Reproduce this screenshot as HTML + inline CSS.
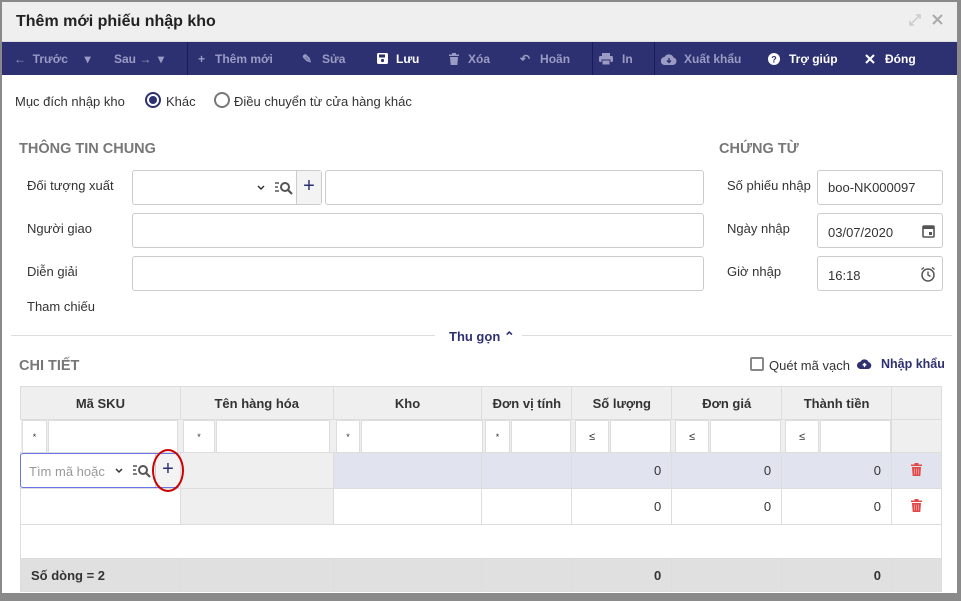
<!DOCTYPE html>
<html><head><meta charset="utf-8"><style>
*{box-sizing:border-box;margin:0;padding:0}
body{width:961px;height:601px;background:#8a8a8a;font-family:"Liberation Sans",Arial,sans-serif;font-size:13px;color:#333;position:relative;overflow:hidden}
.a{position:absolute}
#dlg{position:absolute;left:2px;top:2px;width:955px;height:591px;background:#fff}
#title{position:absolute;left:0;top:0;width:955px;height:40px;background:#efefef;border-bottom:1px solid #ddd}
#tb{position:absolute;left:0;top:40px;width:955px;height:33px;background:#2e3171;color:#9a9cc4;font-weight:bold;font-size:12px}
#tb span{position:absolute;top:10px;white-space:nowrap}
#tb svg{position:absolute}
.w{color:#fff}
.lbl{position:absolute;font-size:13px;color:#333}
.inp{position:absolute;border:1px solid #ccc;border-radius:3px;background:#fff;height:35px}
.h{position:absolute;font-weight:bold;color:#777;font-size:14.5px}
table{position:absolute;left:18px;top:384px;border-collapse:collapse;width:922px}
td{border:1px solid #ddd;padding:0}
</style></head><body>
<div id="dlg">
<div id="title"><div class="a" style="left:14px;top:11px;font-size:16px;font-weight:bold;color:#222">Thêm mới phiếu nhập kho</div>
<svg class="a" style="left:907px;top:12px" width="12" height="12" viewBox="0 0 12 12"><path d="M1 11L11 1M7 1h4v4M1 7v4h4" stroke="#ccc" stroke-width="1.5" fill="none"/></svg>
<svg class="a" style="left:930px;top:12px" width="11" height="11" viewBox="0 0 11 11"><path d="M1 1L10 10M10 1L1 10" stroke="#aaa" stroke-width="2"/></svg></div>
<div id="tb">
<span style="left:12px">←&nbsp; Trước &nbsp;&nbsp;&nbsp; ▾</span>
<span style="left:112px">Sau →&nbsp; ▾</span>
<div class="a" style="left:185px;top:0;width:1px;height:33px;background:#1a1a60"></div>
<span style="left:196px">+&nbsp;&nbsp; Thêm mới</span>
<span style="left:300px">✎&nbsp;&nbsp; Sửa</span>
<svg style="left:375px;top:11px" width="11" height="11" viewBox="0 0 11 11"><rect x="0" y="0" width="11" height="11" rx="1.5" fill="#fff"/><rect x="2" y="1.5" width="6" height="3" fill="#2e3171"/><circle cx="5.5" cy="7.5" r="1.6" fill="#2e3171"/></svg>
<span class="w" style="left:394px">Lưu</span>
<svg style="left:447px;top:11px" width="10" height="12" viewBox="0 0 10 12"><path d="M0 1.5h10v1.5H0zM3 0h4v1.5H3zM1 4h8l-.7 8H1.7z" fill="#9a9cc4"/></svg>
<span style="left:466px">Xóa</span>
<span style="left:518px">↶&nbsp;&nbsp; Hoãn</span>
<div class="a" style="left:590px;top:0;width:1px;height:33px;background:#1a1a60"></div>
<svg style="left:597px;top:11px" width="14" height="12" viewBox="0 0 14 12"><rect x="3" y="0" width="8" height="3" fill="#9a9cc4"/><rect x="0" y="3" width="14" height="6" rx="1.5" fill="#9a9cc4"/><rect x="3" y="7" width="8" height="5" fill="#9a9cc4" stroke="#2e3171"/></svg>
<span style="left:620px">In</span>
<div class="a" style="left:652px;top:0;width:1px;height:33px;background:#1a1a60"></div>
<svg style="left:659px;top:12px" width="16" height="11" viewBox="0 0 16 11"><path d="M4 11a4 4 0 0 1-.5-8A5 5 0 0 1 12.5 3.5 3.8 3.8 0 0 1 12 11z" fill="#9a9cc4"/><path d="M8 4v4M6 6.5l2 2 2-2" stroke="#2e3171" stroke-width="1.4" fill="none"/></svg>
<span style="left:682px">Xuất khẩu</span>
<svg style="left:766px;top:11px" width="12" height="12" viewBox="0 0 12 12"><circle cx="6" cy="6" r="6" fill="#fff"/><text x="6" y="9.5" font-size="9" font-weight="bold" text-anchor="middle" fill="#2e3171" font-family="Liberation Sans">?</text></svg>
<span class="w" style="left:787px">Trợ giúp</span>
<svg style="left:863px;top:12px" width="10" height="10" viewBox="0 0 10 10"><path d="M1 1L9 9M9 1L1 9" stroke="#fff" stroke-width="2"/></svg>
<span class="w" style="left:883px">Đóng</span>
</div>
<div class="lbl" style="left:13px;top:92px">Mục đích nhập kho</div>
<div class="a" style="left:143px;top:90px;width:16px;height:16px;border:2px solid #2e3171;border-radius:50%"><div style="margin:2px;width:8px;height:8px;border-radius:50%;background:#2e3171"></div></div>
<div class="lbl" style="left:164px;top:92px">Khác</div>
<div class="a" style="left:212px;top:90px;width:16px;height:16px;border:2px solid #777;border-radius:50%"></div>
<div class="lbl" style="left:232px;top:92px">Điều chuyển từ cửa hàng khác</div>
<div class="h" style="left:17px;top:139px">THÔNG TIN CHUNG</div>
<div class="h" style="left:717px;top:139px">CHỨNG TỪ</div>
<div class="lbl" style="left:25px;top:176px">Đối tượng xuất</div>
<div class="lbl" style="left:25px;top:219px">Người giao</div>
<div class="lbl" style="left:25px;top:262px">Diễn giải</div>
<div class="lbl" style="left:25px;top:297px">Tham chiếu</div>
<div class="inp" style="left:130px;top:168px;width:190px"><svg class="a" style="left:124px;top:14px" width="8" height="6" viewBox="0 0 8 6"><path d="M1 1l3 3 3-3" stroke="#333" stroke-width="1.5" fill="none"/></svg>
<svg class="a" style="left:142px;top:10px" width="18" height="14" viewBox="0 0 18 14"><path d="M0 2h4M0 6h3M0 10h4" stroke="#555" stroke-width="1.6"/><circle cx="10" cy="6" r="4" stroke="#555" stroke-width="2" fill="none"/><path d="M13 9l4 4" stroke="#555" stroke-width="2.2"/></svg>
<div class="a" style="left:163px;top:0;width:25px;height:33px;background:#f3f3f3;border-left:1px solid #ccc;color:#2e3171;font-size:20px;text-align:center;line-height:30px">+</div></div>
<div class="inp" style="left:323px;top:168px;width:379px"></div>
<div class="inp" style="left:130px;top:211px;width:572px"></div>
<div class="inp" style="left:130px;top:254px;width:572px"></div>
<div class="lbl" style="left:725px;top:176px">Số phiếu nhập</div>
<div class="lbl" style="left:725px;top:219px">Ngày nhập</div>
<div class="lbl" style="left:725px;top:262px">Giờ nhập</div>
<div class="inp" style="left:815px;top:168px;width:126px"><div class="a" style="left:10px;top:9px">boo-NK000097</div></div>
<div class="inp" style="left:815px;top:211px;width:126px"><div class="a" style="left:10px;top:11px">03/07/2020</div><svg class="a" style="left:104px;top:10px" width="13" height="14" viewBox="0 0 13 14"><rect x="1" y="2" width="11" height="11" rx="1" stroke="#555" stroke-width="1.6" fill="none"/><rect x="1" y="2" width="11" height="3" fill="#555"/><rect x="7" y="8" width="3" height="3" fill="#555"/></svg></div>
<div class="inp" style="left:815px;top:254px;width:126px"><div class="a" style="left:10px;top:11px">16:18</div><svg class="a" style="left:102px;top:9px" width="16" height="16" viewBox="0 0 16 16"><circle cx="8" cy="9" r="6" stroke="#555" stroke-width="1.5" fill="none"/><path d="M8 5.5V9l2.5 1.5M1.5 3.5L4 1.5M14.5 3.5L12 1.5" stroke="#555" stroke-width="1.4" fill="none"/></svg></div>
<div class="a" style="left:9px;top:333px;width:424px;height:1px;background:#ddd"></div>
<div class="a" style="left:520px;top:333px;width:430px;height:1px;background:#ddd"></div>
<div class="a" style="left:447px;top:327px;font-weight:bold;color:#2e3171">Thu gọn ⌃</div>
<div class="h" style="left:17px;top:356px">CHI TIẾT</div>
<div class="a" style="left:748px;top:355px;width:14px;height:14px;border:2px solid #888;border-radius:2px"></div>
<div class="lbl" style="left:767px;top:356px">Quét mã vạch</div>
<svg class="a" style="left:855px;top:357px" width="15" height="10" viewBox="0 0 16 11"><path d="M4 11a4 4 0 0 1-.5-8A5 5 0 0 1 12.5 3.5 3.8 3.8 0 0 1 12 11z" fill="#2e3171"/><path d="M8 9V5M6 7l2-2 2 2" stroke="#fff" stroke-width="1.4" fill="none"/></svg>
<div class="a" style="left:879px;top:355px;font-weight:bold;color:#2e3171;font-size:12.5px">Nhập khẩu</div>
<table>
<tr style="height:33px;background:#efefef;font-weight:bold;text-align:center"><td style="width:160px">Mã SKU</td><td style="width:153px">Tên hàng hóa</td><td style="width:149px">Kho</td><td style="width:90px">Đơn vị tính</td><td style="width:100px">Số lượng</td><td style="width:110px">Đơn giá</td><td style="width:110px">Thành tiền</td><td style="width:50px"></td></tr>
<tr style="height:33px;background:#efefef"><td colspan="7" style="border:none"></td><td></td></tr>
<tr style="height:36px;background:#e1e3ef;text-align:right"><td style="background:#fff"></td><td style="background:#efefef"></td><td></td><td></td><td style="padding-right:10px">0</td><td style="padding-right:10px">0</td><td style="padding-right:10px">0</td><td style="text-align:center"><svg width="11" height="13" viewBox="0 0 11 13"><path d="M0 1.5h11v1.5H0zM3.5 0h4v1.5h-4zM1 4h9l-.7 9H1.7z" fill="#e04848"/><path d="M3.5 5.5v6M5.5 5.5v6M7.5 5.5v6" stroke="#f7a0a0" stroke-width=".8"/></svg></td></tr>
<tr style="height:36px;text-align:right"><td></td><td style="background:#efefef"></td><td></td><td></td><td style="padding-right:10px">0</td><td style="padding-right:10px">0</td><td style="padding-right:10px">0</td><td style="text-align:center"><svg width="11" height="13" viewBox="0 0 11 13"><path d="M0 1.5h11v1.5H0zM3.5 0h4v1.5h-4zM1 4h9l-.7 9H1.7z" fill="#e04848"/><path d="M3.5 5.5v6M5.5 5.5v6M7.5 5.5v6" stroke="#f7a0a0" stroke-width=".8"/></svg></td></tr>
<tr style="height:34px"><td colspan="8"></td></tr>
<tr style="height:33px;background:#e0e0e0;font-weight:bold;text-align:right"><td style="text-align:left;padding-left:10px">Số dòng = 2</td><td></td><td></td><td></td><td style="padding-right:10px">0</td><td></td><td style="padding-right:10px">0</td><td></td></tr>
</table>
<div class="a" style="left:20px;top:418px;width:25px;height:33px;background:#fff;border:1px solid #ddd;font-size:9px;text-align:center;line-height:33px">*</div><div class="a" style="left:46px;top:418px;width:130px;height:33px;background:#fff;border:1px solid #ddd"></div>
<div class="a" style="left:181px;top:418px;width:32px;height:33px;background:#fff;border:1px solid #ddd;font-size:9px;text-align:center;line-height:33px">*</div><div class="a" style="left:214px;top:418px;width:114px;height:33px;background:#fff;border:1px solid #ddd"></div>
<div class="a" style="left:334px;top:418px;width:24px;height:33px;background:#fff;border:1px solid #ddd;font-size:9px;text-align:center;line-height:33px">*</div><div class="a" style="left:359px;top:418px;width:122px;height:33px;background:#fff;border:1px solid #ddd"></div>
<div class="a" style="left:483px;top:418px;width:25px;height:33px;background:#fff;border:1px solid #ddd;font-size:9px;text-align:center;line-height:33px">*</div><div class="a" style="left:509px;top:418px;width:60px;height:33px;background:#fff;border:1px solid #ddd"></div>
<div class="a" style="left:573px;top:418px;width:34px;height:33px;background:#fff;border:1px solid #ddd;font-size:11px;text-align:center;line-height:33px">≤</div><div class="a" style="left:608px;top:418px;width:61px;height:33px;background:#fff;border:1px solid #ddd"></div>
<div class="a" style="left:673px;top:418px;width:34px;height:33px;background:#fff;border:1px solid #ddd;font-size:11px;text-align:center;line-height:33px">≤</div><div class="a" style="left:708px;top:418px;width:71px;height:33px;background:#fff;border:1px solid #ddd"></div>
<div class="a" style="left:783px;top:418px;width:34px;height:33px;background:#fff;border:1px solid #ddd;font-size:11px;text-align:center;line-height:33px">≤</div><div class="a" style="left:818px;top:418px;width:71px;height:33px;background:#fff;border:1px solid #ddd"></div>
<div class="a" style="left:18px;top:451px;width:160px;height:35px;border:1px solid #6a74e8;border-radius:3px;background:#fff"><div class="a" style="left:8px;top:10px;color:#999">Tìm mã hoặc</div>
<svg class="a" style="left:94px;top:14px" width="8" height="6" viewBox="0 0 8 6"><path d="M1 1l3 3 3-3" stroke="#333" stroke-width="1.5" fill="none"/></svg>
<svg class="a" style="left:112px;top:10px" width="18" height="14" viewBox="0 0 18 14"><path d="M0 2h4M0 6h3M0 10h4" stroke="#555" stroke-width="1.6"/><circle cx="10" cy="6" r="4" stroke="#555" stroke-width="2" fill="none"/><path d="M13 9l4 4" stroke="#555" stroke-width="2.2"/></svg>
<div class="a" style="left:134px;top:0;width:25px;height:33px;border-left:1px solid #ccc;background:#f3f3f3;color:#2e3171;font-size:20px;text-align:center;line-height:30px">+</div></div>
<div class="a" style="left:150px;top:447px;width:32px;height:43px;border:2px solid #c00;border-radius:50%"></div>
</div>
</body></html>
